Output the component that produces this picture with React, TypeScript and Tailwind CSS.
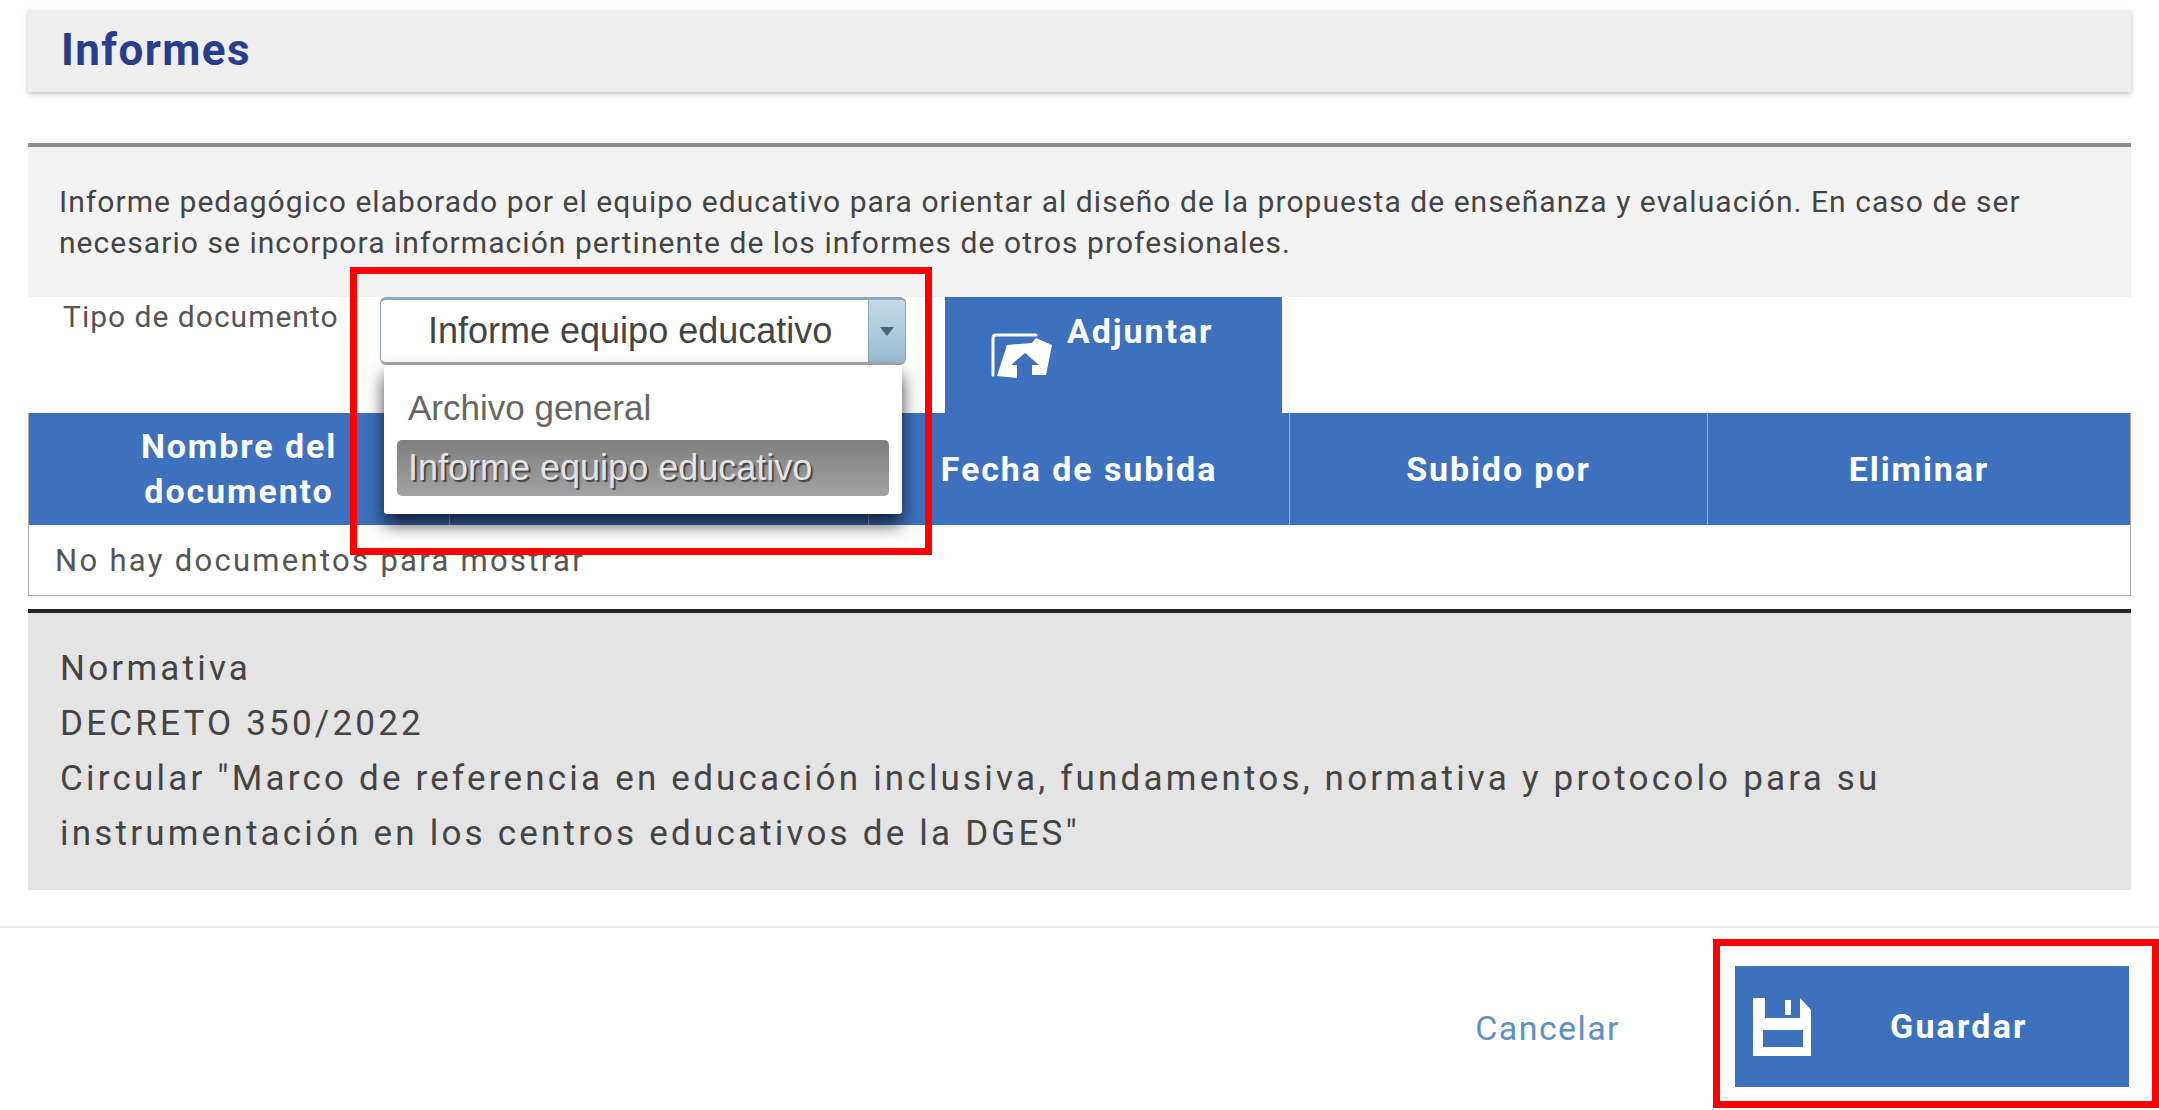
const roboto = 'font-["Roboto","Liberation_Sans",sans-serif]';
const arial = 'font-["Liberation_Sans",Arial,sans-serif]';

function FolderIcon() {
  return (
    <svg viewBox="0 0 100 80" className="w-[100px] h-[80px] shrink-0" fill="none">
      <path d="M18 60V23q0-3 3-3h40" stroke="#fff" strokeWidth="3" strokeLinecap="round" />
      <path d="M32 30l25-2 4-5 16 7-6 30H57V50h7L50 38 36 50h6v13l-20-2z" fill="#fff" />
    </svg>
  );
}

function SaveIcon() {
  return (
    <svg viewBox="0 0 58 58" className="w-[58px] h-[58px] shrink-0">
      <path
        fillRule="evenodd"
        fill="#fff"
        d="M0 0h12v20h35V0l11 12v46H0zM10 32v17h40V32z"
      />
      <rect x="32" y="2" width="6" height="15" fill="#fff" />
    </svg>
  );
}

export default function App() {
  return (
    <div className={`relative w-[2159px] h-[1110px] bg-white overflow-hidden ${roboto}`}>
      <div className="pt-[10px] px-[28px]">
        <div className="h-[82px] bg-[#eeeeee] shadow-[0_2px_5px_rgba(0,0,0,0.25)] flex items-center pl-[33px]">
          <h1 className="text-[44px] tracking-[1.4px] font-bold text-[#2a3d8c] -mt-[2px]">Informes</h1>
        </div>

        <div className="mt-[51px] h-[154px] bg-[#f2f2f2] border-t-[4px] border-[#8c8c8c] pt-[34px] pl-[31px] pr-[80px] text-[30px] tracking-[1.05px] leading-[41px] text-[#444]">
          Informe pedagógico elaborado por el equipo educativo para orientar al diseño de la propuesta de enseñanza y evaluación. En caso de ser necesario se incorpora información pertinente de los informes de otros profesionales.
        </div>

        <div className="flex h-[116px]">
          <div className="w-[352px] pl-[35px] text-[30px] tracking-[1px] leading-[40px] text-[#555]">Tipo de documento</div>

          <div className={`relative w-[526px] h-[68px] ${arial}`}>
            <div className="flex h-full rounded-[6px] border border-[#8aa9bf] border-t-[3px] border-b-[3px] border-b-[#aaa] bg-white overflow-hidden">
              <div className="flex-1 pl-[47px] flex items-center text-[36px] text-[#444]">Informe equipo educativo</div>
              <div className="w-[37px] flex items-center justify-center bg-gradient-to-b from-[#c5d9e6] to-[#96bdd4] border-l border-[#8aa9bf]">
                <div className="w-0 h-0 border-x-[7px] border-x-transparent border-t-[9px] border-t-[#4a6478]" />
              </div>
            </div>

            <div className="absolute top-[68px] left-[4px] w-[518px] h-[149px] bg-white rounded-[3px] z-10 pt-[15px] px-[13px] shadow-[0_10px_18px_rgba(0,0,0,0.75)]">
              <div className="h-[56px] pl-[11px] flex items-center text-[35px] text-[#666]">Archivo general</div>
              <div className="h-[56px] mt-[4px] pl-[11px] flex items-center rounded-[5px] bg-gradient-to-b from-[#7f7f7f] to-[#a3a3a3] text-[36px] text-[#e4e4e4] [text-shadow:2px_2px_1px_#444]">
                Informe equipo educativo
              </div>
            </div>
          </div>

          <div className="ml-[39px] w-[337px] h-[116px] bg-[#3d71bd] flex items-start pl-[30px] text-white">
            <div className="mt-[18px]"><FolderIcon /></div>
            <span className="-ml-[8px] mt-[9px] text-[34px] tracking-[1.9px] font-bold">Adjuntar</span>
          </div>
        </div>

        <div className="border border-t-0 border-[#aaa]">
          <div className="grid grid-cols-[421px_419px_421px_418px_1fr] h-[112px] bg-[#3d71bd] text-white font-bold text-[34px] tracking-[1.9px] leading-[45px] text-center">
            <div className="flex items-center justify-center border-r border-[#9db5d6]">
              <span className="w-[240px]">Nombre del documento</span>
            </div>
            <div className="border-r border-[#9db5d6]" />
            <div className="flex items-center justify-center border-r border-[#9db5d6]">Fecha de subida</div>
            <div className="flex items-center justify-center border-r border-[#9db5d6]">Subido por</div>
            <div className="flex items-center justify-center">Eliminar</div>
          </div>
          <div className="h-[70px] pl-[26px] pt-[16px] text-[31px] tracking-[2.3px] leading-[40px] text-[#555]">No hay documentos para mostrar</div>
        </div>

        <div className="mt-[13px] h-[281px] bg-[#e4e4e4] border-t-[4px] border-[#222] pt-[28px] pl-[32px] pr-[200px] text-[35px] leading-[55px] tracking-[3.2px] text-[#444]">
          <p>Normativa</p>
          <p>DECRETO 350/2022</p>
          <p>Circular "Marco de referencia en educación inclusiva, fundamentos, normativa y protocolo para su instrumentación en los centros educativos de la DGES"</p>
        </div>
      </div>

      <div className="mt-[36px] border-t-[2px] border-[#e8e8e8] flex justify-end pt-[38px] pr-[30px]">
        <div className="flex items-center">
          <a className="mt-[3px] text-[34px] text-[#5f8fc4] tracking-[1.4px] mr-[115px]">Cancelar</a>
          <button className="w-[394px] h-[121px] bg-[#3d71bd] flex items-center pl-[18px] text-white">
            <SaveIcon />
            <span className="ml-[79px] text-[34px] tracking-[2.2px] font-bold">Guardar</span>
          </button>
        </div>
      </div>

      <div className="absolute left-[350px] top-[267px] w-[582px] h-[288px] border-[7px] border-[#ff0000] z-20 pointer-events-none" />
      <div className="absolute left-[1713px] top-[939px] w-[446px] h-[169px] border-[7px] border-[#ff0000] z-20 pointer-events-none" />
    </div>
  );
}
